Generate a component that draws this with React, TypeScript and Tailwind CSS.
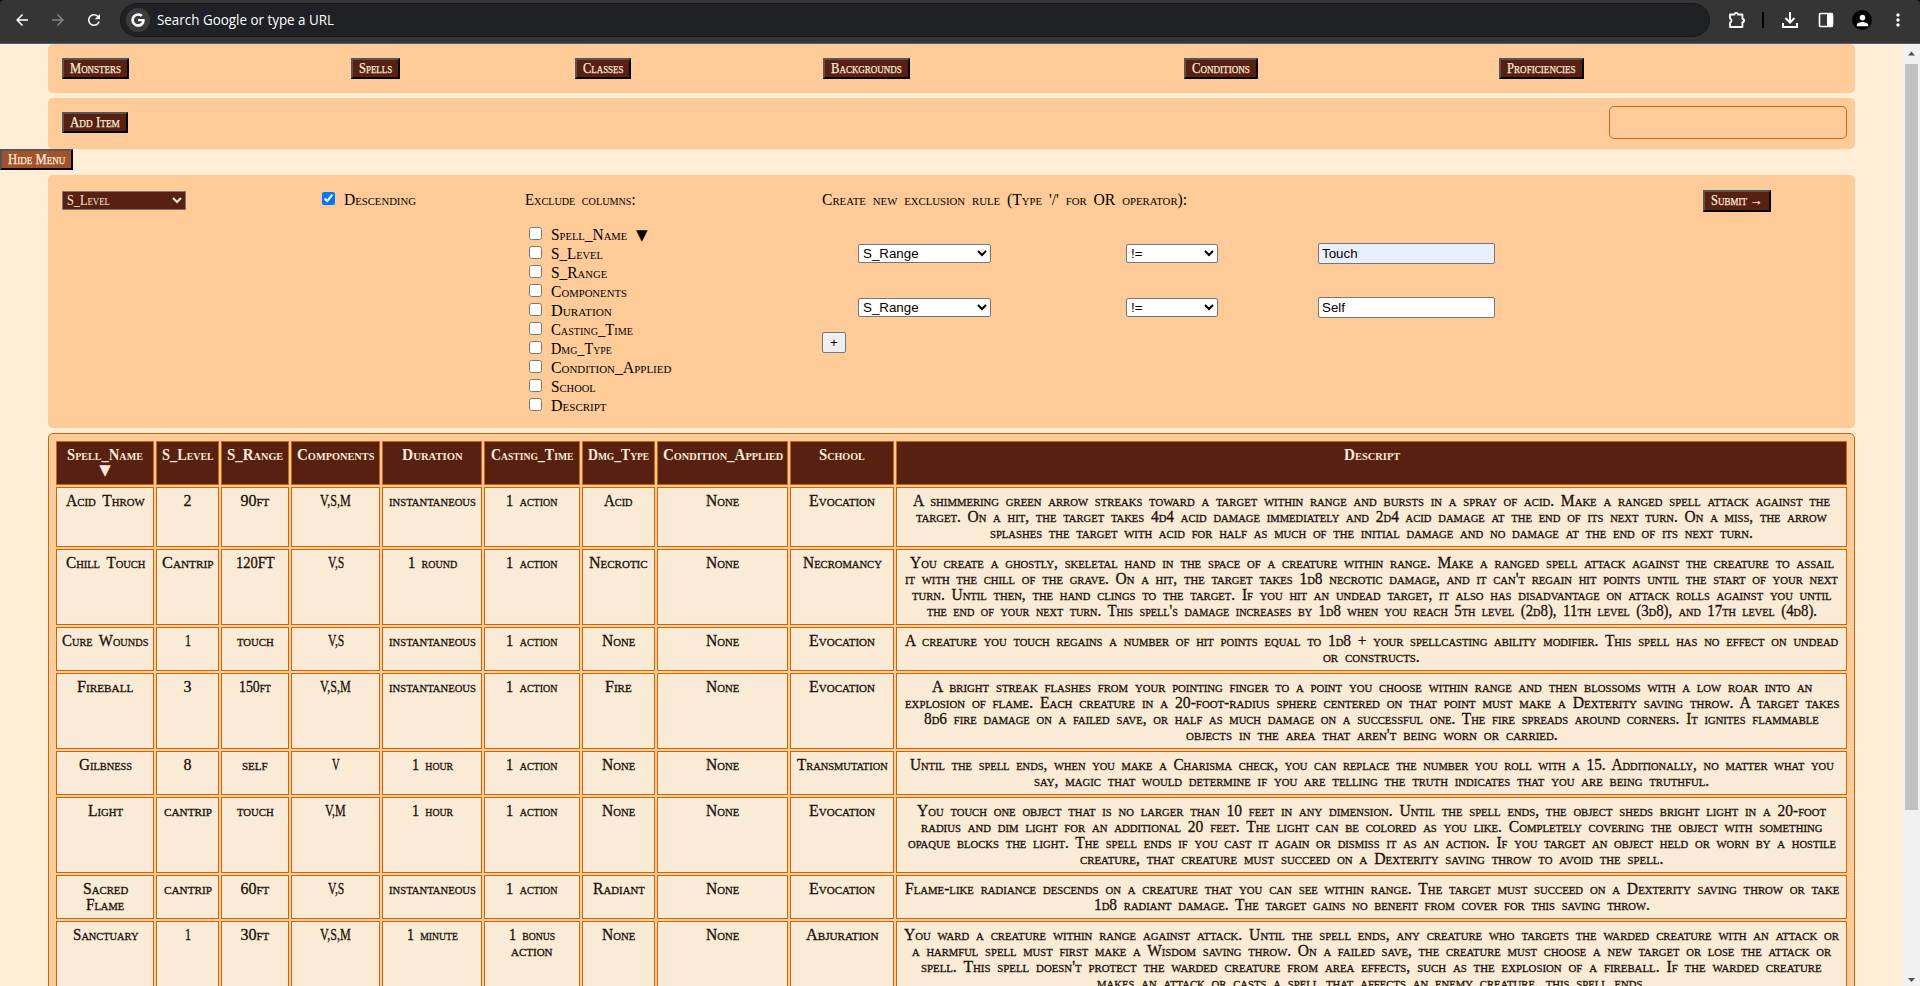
import { useLayoutEffect, useRef, useState, type ReactNode } from "react";
import { FaGoogle } from "react-icons/fa";
import { MdArrowBack, MdArrowForward, MdMoreVert, MdPerson, MdRefresh } from "react-icons/md";

type Line = [text: string, width: number];

/* Condenses or widens a run of text so that it fills the given width exactly. */
function Fit({ line, className = "" }: { line: Line; className?: string }) {
  const [text, width] = line;
  const ref = useRef<HTMLSpanElement>(null);
  const [scale, setScale] = useState(1);
  useLayoutEffect(() => {
    const el = ref.current;
    if (el && el.offsetWidth > 0) setScale(width / el.offsetWidth);
  }, [text, width]);
  return (
    <span className={`inline-flex justify-start whitespace-nowrap ${className}`} style={{ width }}>
      <span ref={ref} className="shrink-0 origin-left" style={{ transform: `scaleX(${scale})` }}>{text}</span>
    </span>
  );
}

const headers: Line[] = [
  ["Spell_Name", 76], ["S_Level", 52], ["S_Range", 56], ["Components", 77], ["Duration", 61],
  ["Casting_Time", 82], ["Dmg_Type", 61], ["Condition_Applied", 120], ["School", 46], ["Descript", 56],
];

const none: Line[] = [["None", 33]];
const action: Line[] = [["1 action", 52]];
const evocation: Line[] = [["Evocation", 66]];
const instant: Line[] = [["instantaneous", 87]];
const vsm: Line[] = [["V,S,M", 31]];
const vs: Line[] = [["V,S", 16]];
const hour: Line[] = [["1 hour", 41]];

const rows: Line[][][] = [
  [
    [["Acid Throw", 79]], [["2", 8]], [["90ft", 29]], vsm, instant, action, [["Acid", 29]], none, evocation,
    [
      ["A shimmering green arrow streaks toward a target within range and bursts in a spray of acid. Make a ranged spell attack against the", 917],
      ["target. On a hit, the target takes 4d4 acid damage immediately and 2d4 acid damage at the end of its next turn. On a miss, the arrow", 911],
      ["splashes the target with acid for half as much of the initial damage and no damage at the end of its next turn.", 763],
    ],
  ],
  [
    [["Chill Touch", 79]], [["Cantrip", 51]], [["120FT", 39]], vs, [["1 round", 49]], action, [["Necrotic", 59]], none, [["Necromancy", 79]],
    [
      ["You create a ghostly, skeletal hand in the space of a creature within range. Make a ranged spell attack against the creature to assail", 924],
      ["it with the chill of the grave. On a hit, the target takes 1d8 necrotic damage, and it can't regain hit points until the start of your next", 933],
      ["turn. Until then, the hand clings to the target. If you hit an undead target, it also has disadvantage on attack rolls against you until", 919],
      ["the end of your next turn. This spell's damage increases by 1d8 when you reach 5th level (2d8), 11th level (3d8), and 17th level (4d8).", 890],
    ],
  ],
  [
    [["Cure Wounds", 86]], [["1", 6]], [["touch", 37]], vs, instant, action, none, none, evocation,
    [
      ["A creature you touch regains a number of hit points equal to 1d8 + your spellcasting ability modifier. This spell has no effect on undead", 933],
      ["or constructs.", 97],
    ],
  ],
  [
    [["Fireball", 56]], [["3", 8]], [["150ft", 32]], vsm, instant, action, [["Fire", 27]], none, evocation,
    [
      ["A bright streak flashes from your pointing finger to a point you choose within range and then blossoms with a low roar into an", 880],
      ["explosion of flame. Each creature in a 20-foot-radius sphere centered on that point must make a Dexterity saving throw. A target takes", 934],
      ["8d6 fire damage on a failed save, or half as much damage on a successful one. The fire spreads around corners. It ignites flammable", 895],
      ["objects in the area that aren't being worn or carried.", 372],
    ],
  ],
  [
    [["Gilbness", 53]], [["8", 8]], [["self", 26]], [["V", 8]], hour, action, none, none, [["Transmutation", 91]],
    [
      ["Until the spell ends, when you make a Charisma check, you can replace the number you roll with a 15. Additionally, no matter what you", 924],
      ["say, magic that would determine if you are telling the truth indicates that you are being truthful.", 675],
    ],
  ],
  [
    [["Light", 35]], [["cantrip", 48]], [["touch", 37]], [["V,M", 21]], hour, action, none, none, evocation,
    [
      ["You touch one object that is no larger than 10 feet in any dimension. Until the spell ends, the object sheds bright light in a 20-foot", 909],
      ["radius and dim light for an additional 20 feet. The light can be colored as you like. Completely covering the object with something", 901],
      ["opaque blocks the light. The spell ends if you cast it again or dismiss it as an action. If you target an object held or worn by a hostile", 928],
      ["creature, that creature must succeed on a Dexterity saving throw to avoid the spell.", 583],
    ],
  ],
  [
    [["Sacred", 45], ["Flame", 38]], [["cantrip", 48]], [["60ft", 29]], vs, instant, action, [["Radiant", 52]], none, evocation,
    [
      ["Flame-like radiance descends on a creature that you can see within range. The target must succeed on a Dexterity saving throw or take", 934],
      ["1d8 radiant damage. The target gains no benefit from cover for this saving throw.", 556],
    ],
  ],
  [
    [["Sanctuary", 65]], [["1", 6]], [["30ft", 29]], vsm, [["1 minute", 51]], [["1 bonus", 46], ["action", 42]], none, none, [["Abjuration", 72]],
    [
      ["You ward a creature within range against attack. Until the spell ends, any creature who targets the warded creature with an attack or", 935],
      ["a harmful spell must first make a Wisdom saving throw. On a failed save, the creature must choose a new target or lose the attack or", 919],
      ["spell. This spell doesn't protect the warded creature from area effects, such as the explosion of a fireball. If the warded creature", 901],
      ["makes an attack or casts a spell that affects an enemy creature, this spell ends.", 549],
    ],
  ],
];

const columns: Line[] = [
  ["Spell_Name", 76], ["S_Level", 52], ["S_Range", 56], ["Components", 76], ["Duration", 61],
  ["Casting_Time", 82], ["Dmg_Type", 61], ["Condition_Applied", 120], ["School", 45], ["Descript", 56],
];

const nav: Line[] = [["Monsters", 51], ["Spells", 33], ["Classes", 40], ["Backgrounds", 71], ["Conditions", 58], ["Proficiencies", 69]];

function Button({ line, className = "h-[21px] bg-[#572010]" }: { line: Line; className?: string }) {
  return (
    <button
      className={`flex items-center border-2 border-t-[#555] border-r-black border-b-black border-l-[#555] px-1.5 text-[14px] leading-none text-[#faebd7] [font-variant:small-caps] [-webkit-text-stroke:0.25px_#faebd7] ${className}`}
    >
      <Fit line={line} />
    </button>
  );
}

function Chevron() {
  return (
    <svg width="10" height="7" viewBox="0 0 10 7" fill="none" stroke="currentColor" strokeWidth="2">
      <path d="M1 1l4 4 4-4" />
    </svg>
  );
}

function Select({ children, className }: { children: ReactNode; className: string }) {
  return (
    <div role="combobox" className={`flex h-[19px] items-center justify-between border border-[#767676] pr-[3px] pl-1 text-[13.33px] leading-none ${className}`}>
      {children}
      <Chevron />
    </div>
  );
}

function Rule({ value, filled }: { value: string; filled: boolean }) {
  return (
    <div className="grid h-[21px] grid-cols-[268px_192px_177px] items-center font-['Liberation_Sans',sans-serif]">
      <Select className="w-[133px] rounded-[2px] bg-white">S_Range</Select>
      <Select className="w-[92px] rounded-[2px] bg-white">!=</Select>
      <input
        readOnly
        value={value}
        className={`h-[21px] w-[177px] rounded-[2px] border border-[#767676] px-[3px] text-[13.33px] outline-none ${filled ? "bg-[#e8f0fe]" : "bg-white"}`}
      />
    </div>
  );
}

function Toolbar() {
  return (
    <div className="bg-black">
      <div className="flex h-[44px] items-start rounded-t-[4px] border-b border-[#5c5c5c] bg-[#353535] text-white">
        <div className="flex h-10 w-[120px] items-center gap-[18px] pl-[13px]">
          <MdArrowBack size={18} />
          <MdArrowForward size={18} className="text-[#868686]" />
          <MdRefresh size={18} />
        </div>
        <div className="mt-[3px] flex h-[34px] w-[1590px] items-center rounded-full border border-[#18191c] bg-[#202124] pl-[5px]">
          <div className="mr-[7px] flex size-6 items-center justify-center rounded-full bg-[#3c3c3c]">
            <FaGoogle size={14} />
          </div>
          <Fit line={["Search Google or type a URL", 177]} className="font-['Open_Sans',sans-serif] text-[14px]" />
        </div>
        <div className="flex h-10 flex-1 items-center pl-[18px]">
          <svg width="18" height="18" viewBox="0 0 18 18" fill="none" stroke="white" strokeWidth="1.8" strokeLinejoin="round">
            <path d="M2 3.500h4.500a1.700 1.700 0 013.400 0h4.500v4.300a1.700 1.700 0 010 3.400v4.800H2v-4.300a2.200 2.200 0 000-4.200z" />
          </svg>
          <div className="ml-4 h-4 w-[2px] bg-black" />
          <svg width="16" height="16" viewBox="0 0 16 16" fill="none" stroke="white" strokeWidth="2" className="ml-[18px]">
            <path d="M8 0v10M3.500 6L8 10.500 12.500 6M1 11v4h14v-4" />
          </svg>
          <svg width="16" height="16" viewBox="0 0 16 16" className="ml-5">
            <rect x="1.500" y="1.500" width="13" height="13" rx="1" fill="none" stroke="white" strokeWidth="1.600" />
            <rect x="9" y="1" width="6" height="14" fill="white" />
          </svg>
          <div className="ml-[18px] flex size-5 items-center justify-center rounded-full bg-black">
            <MdPerson size={17} />
          </div>
          <MdMoreVert size={20} className="ml-4" />
        </div>
      </div>
    </div>
  );
}

function Scrollbar() {
  return (
    <div className="flex w-[17px] shrink-0 flex-col items-center bg-[#f1f1f1] text-[#505050]">
      <svg width="17" height="20" viewBox="0 0 17 20"><path d="M5 11.500l3.500-4 3.500 4z" fill="currentColor" /></svg>
      <div className="h-[746px] w-[13px] bg-[#c1c1c1]" />
      <svg width="17" height="17" viewBox="0 0 17 17" className="mt-auto"><path d="M5 9l3.500 4 3.500-4z" fill="currentColor" /></svg>
    </div>
  );
}

export default function App() {
  return (
    <div className="flex h-[986px] w-[1920px] flex-col overflow-hidden font-['Liberation_Serif',serif] text-[16px] leading-[16px] text-black">
      <Toolbar />
      <div className="flex min-h-0 flex-1 bg-[#ffeed5]">
        <main className="h-full min-w-0 flex-1 overflow-hidden [word-spacing:3px]">
          <nav className="ml-12 grid h-[49px] w-[1807px] grid-cols-[289px_224px_248px_361px_315px_auto] content-start justify-items-start rounded-[5px] bg-[#ffcb98] px-[14px] pt-[14px]">
            {nav.map((n) => <Button key={n[0]} line={n} />)}
          </nav>
          <section className="mt-[5px] ml-12 flex h-[51px] w-[1807px] items-start justify-between rounded-[5px] bg-[#ffcb98] pr-2 pl-[14px]">
            <div className="pt-[14px]"><Button line={["Add Item", 50]} /></div>
            <input className="mt-2 h-[33px] w-[238px] rounded-[5px] border border-[#cc6600]" />
          </section>
          <Button line={["Hide Menu", 57]} className="h-[21px] bg-[#a0522d]" />
          <section className="mt-[5px] ml-12 grid h-[253px] w-[1807px] grid-cols-[260px_203px_297px_881px_auto] items-start rounded-[5px] bg-[#ffcb98] pl-[14px] [font-variant:small-caps]">
            <div className="pt-4">
              <Select className="w-[124px] bg-[#572010] text-[#faebd7]"><Fit line={["S_Level", 43]} className="text-[14px]" /></Select>
            </div>
            <label className="flex items-center pt-4">
              <input type="checkbox" defaultChecked className="mt-px mr-[9px] mb-[3px] size-[13px] accent-[#0075ff]" />
              <Fit line={["Descending", 72]} />
            </label>
            <div className="pt-[17px]">
              <Fit line={["Exclude columns:", 111]} />
              <div className="mt-[17px] flex flex-col pl-1">
                {columns.map((c, i) => (
                  <label key={c[0]} className="flex h-[19px] items-center">
                    <input type="checkbox" className="mr-[9px] mb-[2px] size-[13px]" />
                    <Fit line={c} />
                    {i === 0 && <span className="ml-[9px] font-['DejaVu_Sans',sans-serif] text-[15px]">▼</span>}
                  </label>
                ))}
              </div>
            </div>
            <div className="pt-[17px] [font-variant:normal]">
              <Fit line={["Create new exclusion rule (Type '/' for OR operator):", 365]} className="[font-variant:small-caps]" />
              <div className="mt-[35px] flex flex-col gap-[33px] pl-9">
                <Rule value="Touch" filled />
                <Rule value="Self" filled={false} />
              </div>
              <button className="mt-[14px] flex h-[21px] w-6 items-center justify-center rounded-[2px] border border-[#767676] bg-[#efefef] font-['Liberation_Sans',sans-serif] text-[13.33px]">+</button>
            </div>
            <div className="pt-[15px]"><Button line={["Submit →", 52]} className="h-[22px] bg-[#572010]" /></div>
          </section>
          <section className="mt-[5px] ml-12 w-[1807px] rounded-[5px] border border-[#cc6600] bg-[#ffcb98] p-[5px]">
            <table className="w-[1795px] table-fixed border-separate border-spacing-[2px] text-center [font-variant:small-caps]">
              <colgroup>
                <col className="w-[98px]" /><col className="w-[63px]" /><col className="w-[68px]" /><col className="w-[89px]" /><col className="w-[100px]" />
                <col className="w-[96px]" /><col className="w-[73px]" /><col className="w-[131px]" /><col className="w-[104px]" /><col className="w-[951px]" />
              </colgroup>
              <thead>
                <tr>
                  {headers.map((h, i) => (
                    <th key={h[0]} className="h-[44px] border border-[#cc6600] bg-[#572010] p-0 pt-[5px] align-top font-bold text-[#faebd7]">
                      <div className="flex flex-col items-center">
                        <Fit line={h} />
                        {i === 0 && <span className="-mt-px font-['DejaVu_Sans',sans-serif] text-[15px] font-normal">▼</span>}
                      </div>
                    </th>
                  ))}
                </tr>
              </thead>
              <tbody className="text-[#1c1008] [-webkit-text-stroke:0.3px_#1c1008]">
                {rows.map((cells) => (
                  <tr key={cells[0][0][0]}>
                    {cells.map((lines, c) => (
                      <td key={c} className="border border-[#cc6600] bg-[#faebd7] px-0 py-[5px] align-top">
                        <div className="flex flex-col items-center">
                          {lines.map((l) => <Fit key={l[0]} line={l} />)}
                        </div>
                      </td>
                    ))}
                  </tr>
                ))}
              </tbody>
            </table>
          </section>
        </main>
        <Scrollbar />
      </div>
    </div>
  );
}
